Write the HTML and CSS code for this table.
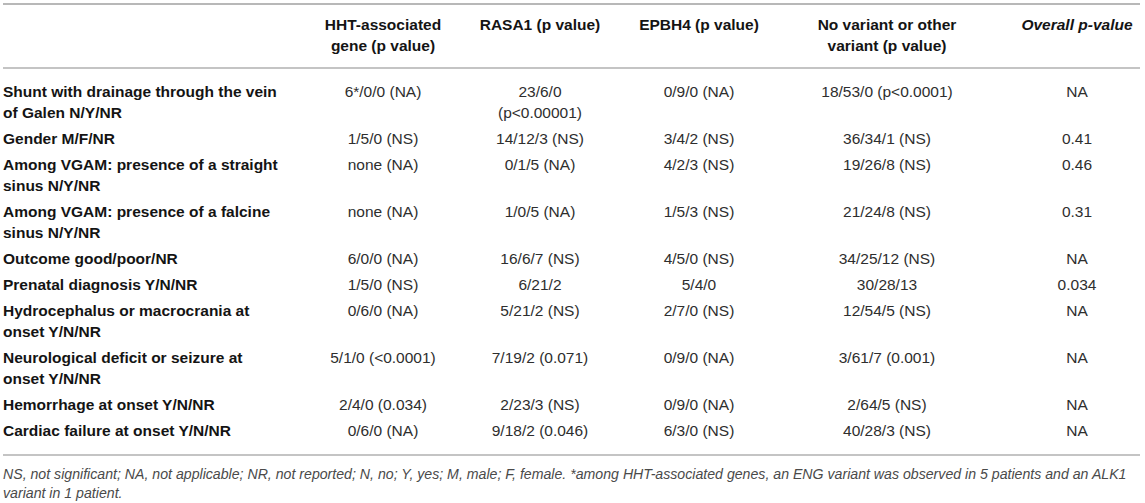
FILE: index.html
```html
<!DOCTYPE html>
<html lang="en">
<head>
    <meta charset="UTF-8">
    <meta name="viewport" content="width=device-width, initial-scale=1.0">
    <title>Genotype and clinical features</title>
    <link rel="stylesheet" href="styles.css">
</head>
<body>

<div class="wrap">
    <table class="tbl">
        <colgroup>
            <col class="c-label">
            <col class="c-hht">
            <col class="c-rasa">
            <col class="c-ephb">
            <col class="c-none">
            <col class="c-all">
        </colgroup>
        <thead>
            <tr>
                <th></th>
                <th>HHT-associated<br>gene (p value)</th>
                <th>RASA1 (p value)</th>
                <th>EPBH4 (p value)</th>
                <th>No variant or other<br>variant (p value)</th>
                <th class="last"><i>Overall p-value</i></th>
            </tr>
        </thead>
        <tbody>
            <tr>
                <th>Shunt with drainage through the vein of Galen N/Y/NR</th>
                <td>6*/0/0 (NA)</td>
                <td>23/6/0<br>(p&lt;0.00001)</td>
                <td>0/9/0 (NA)</td>
                <td>18/53/0 (p&lt;0.0001)</td>
                <td class="last">NA</td>
            </tr>
            <tr>
                <th>Gender M/F/NR</th>
                <td>1/5/0 (NS)</td>
                <td>14/12/3 (NS)</td>
                <td>3/4/2 (NS)</td>
                <td>36/34/1 (NS)</td>
                <td class="last">0.41</td>
            </tr>
            <tr>
                <th>Among VGAM: presence of a straight sinus N/Y/NR</th>
                <td>none (NA)</td>
                <td>0/1/5 (NA)</td>
                <td>4/2/3 (NS)</td>
                <td>19/26/8 (NS)</td>
                <td class="last">0.46</td>
            </tr>
            <tr>
                <th>Among VGAM: presence of a falcine sinus N/Y/NR</th>
                <td>none (NA)</td>
                <td>1/0/5 (NA)</td>
                <td>1/5/3 (NS)</td>
                <td>21/24/8 (NS)</td>
                <td class="last">0.31</td>
            </tr>
            <tr>
                <th>Outcome good/poor/NR</th>
                <td>6/0/0 (NA)</td>
                <td>16/6/7 (NS)</td>
                <td>4/5/0 (NS)</td>
                <td>34/25/12 (NS)</td>
                <td class="last">NA</td>
            </tr>
            <tr>
                <th>Prenatal diagnosis Y/N/NR</th>
                <td>1/5/0 (NS)</td>
                <td>6/21/2</td>
                <td>5/4/0</td>
                <td>30/28/13</td>
                <td class="last">0.034</td>
            </tr>
            <tr>
                <th>Hydrocephalus or macrocrania at onset Y/N/NR</th>
                <td>0/6/0 (NA)</td>
                <td>5/21/2 (NS)</td>
                <td>2/7/0 (NS)</td>
                <td>12/54/5 (NS)</td>
                <td class="last">NA</td>
            </tr>
            <tr>
                <th>Neurological deficit or seizure at onset Y/N/NR</th>
                <td>5/1/0 (&lt;0.0001)</td>
                <td>7/19/2 (0.071)</td>
                <td>0/9/0 (NA)</td>
                <td>3/61/7 (0.001)</td>
                <td class="last">NA</td>
            </tr>
            <tr>
                <th>Hemorrhage at onset Y/N/NR</th>
                <td>2/4/0 (0.034)</td>
                <td>2/23/3 (NS)</td>
                <td>0/9/0 (NA)</td>
                <td>2/64/5 (NS)</td>
                <td class="last">NA</td>
            </tr>
            <tr>
                <th>Cardiac failure at onset Y/N/NR</th>
                <td>0/6/0 (NA)</td>
                <td>9/18/2 (0.046)</td>
                <td>6/3/0 (NS)</td>
                <td>40/28/3 (NS)</td>
                <td class="last">NA</td>
            </tr>
        </tbody>
    </table>

    <p class="note">NS, not significant; NA, not applicable; NR, not reported; N, no; Y, yes; M, male; F, female. *among HHT-associated genes, an ENG variant was observed in 5 patients and an ALK1 variant in 1 patient.</p>
</div>

</body>
</html>
```

FILE: styles.css
```css
body {
    font-family: "Liberation Sans", Arial, sans-serif;
    margin: 0;
    padding: 0;
    background-color: #fff;
    color: #2e2e2e;
}

.wrap {
    width: 1137px;
    margin-left: 3px;
    padding-top: 3px;
}

.tbl {
    width: 100%;
    border-collapse: collapse;
    table-layout: fixed;
    font-size: 15.5px;
    line-height: 21px;
    border-top: 2px solid #b8b8b8;
    border-bottom: 2px solid #c4c4c4;
}

.c-label { width: 302px; }
.c-hht { width: 156px; }
.c-rasa { width: 158px; }
.c-ephb { width: 160px; }
.c-none { width: 216px; }
.c-all { width: 145px; }

.tbl thead th {
    padding: 9px 6px 11px;
    text-align: center;
    vertical-align: top;
    font-weight: bold;
    color: #141414;
    border-bottom: 2px solid #c4c4c4;
}

.tbl thead th.last {
    padding-left: 19px;
    padding-right: 0;
}

.tbl tbody th {
    padding: 2px 22px 3px 0;
    text-align: left;
    vertical-align: top;
    font-weight: bold;
    color: #141414;
}

.tbl td {
    padding: 2px 10px 3px;
    text-align: center;
    vertical-align: top;
}

.tbl td.last {
    padding-left: 19px;
    padding-right: 0;
}

.tbl tbody tr:first-child th,
.tbl tbody tr:first-child td {
    padding-top: 12px;
}

.tbl tbody tr:last-child th,
.tbl tbody tr:last-child td {
    padding-bottom: 13px;
}

.note {
    margin: 9px 0 0;
    font-size: 14.15px;
    line-height: 19px;
    font-style: italic;
    color: #4a4a4a;
}
```
